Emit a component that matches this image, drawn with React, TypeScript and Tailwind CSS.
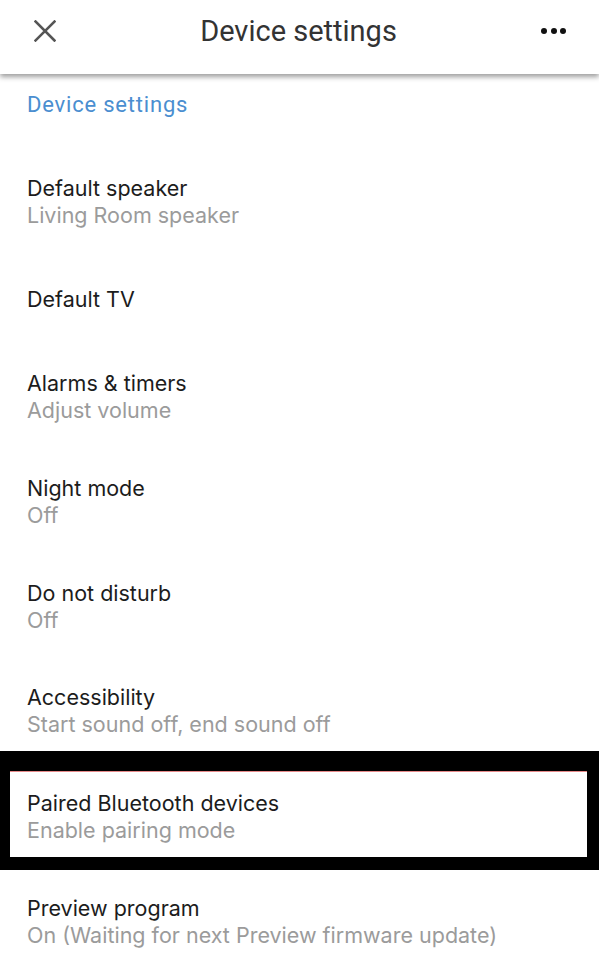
import React from "react";

const rows = [
  { t: "Default speaker", s: "Living Room speaker", cls: "h-[105px]" },
  { t: "Default TV", cls: "h-[90px]" },
  { t: "Alarms & timers", s: "Adjust volume", cls: "h-[105px]" },
  { t: "Night mode", s: "Off", cls: "h-[105px]" },
  { t: "Do not disturb", s: "Off", cls: "h-[105px]" },
];

function Row({ t, s }: { t: string; s?: string }) {
  return (
    <div className="flex flex-col">
      <div className="text-[21.5px] leading-[27px] text-[#1c1c1c]">{t}</div>
      {s && <div className="text-[21.5px] leading-[27px] text-[#9b9b9b]">{s}</div>}
    </div>
  );
}

export default function App() {
  return (
    <div
      className="w-[599px] h-[961px] overflow-hidden bg-white"
      style={{ fontFamily: "Inter, 'Noto Sans', sans-serif" }}
    >
      <header className="relative z-10 h-[74px] bg-white shadow-[0_3px_5px_rgba(0,0,0,0.38)]">
        <div className="h-[62px] flex items-center justify-between pl-[34px] pr-[33px]">
          <svg width="22" height="22" viewBox="0 0 22 22">
            <path d="M1.5 1.5 L20.5 20.5 M20.5 1.5 L1.5 20.5" stroke="#555" strokeWidth="2.5" strokeLinecap="square" />
          </svg>
          <div
            className="text-[29px] leading-[34px] text-[#333]"
            style={{ fontFamily: "Roboto, 'Open Sans', sans-serif" }}
          >
            Device settings
          </div>
          <div className="flex gap-[3.5px] items-center">
            <span className="w-[6px] h-[6px] rounded-full bg-[#111]" />
            <span className="w-[6px] h-[6px] rounded-full bg-[#111]" />
            <span className="w-[6px] h-[6px] rounded-full bg-[#111]" />
          </div>
        </div>
      </header>

      <div className="h-[75px] pl-[27px] pt-[17px]">
        <div
          className="text-[22px] leading-[27px] tracking-[0.8px] text-[#4a8ed0]"
          style={{ fontFamily: "Roboto, sans-serif" }}
        >
          Device settings
        </div>
      </div>

      {rows.map((r) => (
        <div key={r.t} className={`${r.cls} pl-[27px] flex items-center`}>
          <Row t={r.t} s={r.s} />
        </div>
      ))}

      <div className="h-[92px] pl-[27px] pt-[25px]">
        <Row t="Accessibility" s="Start sound off, end sound off" />
      </div>

      <div className="h-[119px] bg-black pt-[20px] pb-[13px] pl-[10px] pr-[12px]">
        <div className="h-full bg-white border-t border-[#e88a8a] pl-[17px] pt-[18px]">
          <Row t="Paired Bluetooth devices" s="Enable pairing mode" />
        </div>
      </div>

      <div className="pl-[27px] pt-[25px]">
        <Row t="Preview program" s="On (Waiting for next Preview firmware update)" />
      </div>
    </div>
  );
}
